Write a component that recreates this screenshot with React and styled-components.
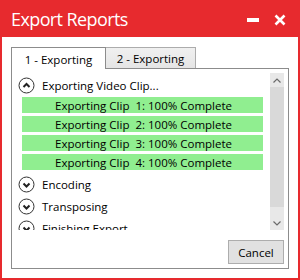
import React from 'react';
import styled, { createGlobalStyle } from 'styled-components';

const GlobalStyle = createGlobalStyle`
  html, body {
    margin: 0;
    padding: 0;
    background: #ffffff;
  }
  body {
    font-family: "Open Sans", "Noto Sans", "Liberation Sans", sans-serif;
  }
`;

const Window = styled.div`
  width: 300px;
  height: 280px;
  display: flex;
  flex-direction: column;
  box-sizing: border-box;
  background: #ffffff;
`;

const TitleBar = styled.div`
  height: 37px;
  flex: none;
  background: #e72a2e;
  display: flex;
  align-items: center;
  justify-content: space-between;
  padding: 0 14px 0 11px;
  border-top: 1px solid #e72a2e;
  box-sizing: border-box;
`;

const Title = styled.div`
  color: #ffffff;
  font-size: 18px;
  letter-spacing: -0.6px;
  margin-top: -1px;
`;

const Controls = styled.div`
  display: flex;
  align-items: center;
  gap: 15px;
  margin-top: 1px;
`;

const Body = styled.div`
  flex: 1;
  display: flex;
  flex-direction: column;
  border: 2px solid #e72a2e;
  border-top: none;
  padding: 10px 9px 9px;
  box-sizing: border-box;
  min-height: 0;
`;

const TabStrip = styled.div`
  display: flex;
  height: 21px;
  flex: none;
  align-items: flex-end;
`;

const Tab = styled.div`
  box-sizing: border-box;
  width: ${p => (p.$active ? '95px' : '91px')};
  height: ${p => (p.$active ? '22px' : '21px')};
  margin-left: ${p => (p.$active ? '0' : '-1px')};
  margin-bottom: ${p => (p.$active ? '-1px' : '0')};
  position: relative;
  z-index: ${p => (p.$active ? 1 : 0)};
  border: 1px solid ${p => (p.$active ? '#8c8c8c' : '#acacac')};
  border-bottom: none;
  background: ${p => (p.$active ? '#ffffff' : 'linear-gradient(#f0f0f0, #e5e5e5)')};
  color: #000000;
  font-size: 11.5px;
  display: flex;
  align-items: center;
  justify-content: center;
  padding-top: ${p => (p.$active ? '1px' : '0')};
`;

const TabPanel = styled.div`
  height: 201px;
  flex: none;
  box-sizing: border-box;
  border: 1px solid #8c8c8c;
  padding: 4px;
  display: flex;
  flex-direction: column;
`;

const ScrollArea = styled.div`
  height: 157px;
  flex: none;
  display: flex;
`;

const List = styled.div`
  flex: 1;
  overflow: hidden;
  padding-top: 1px;
`;

const ExpanderHeader = styled.div`
  height: 22px;
  display: flex;
  align-items: center;
  gap: 7px;
  padding-left: 2px;
  font-size: 11.5px;
  color: #000000;
  margin-top: ${p => (p.$gap ? '3px' : '0')};
`;

const Rows = styled.div`
  display: flex;
  flex-direction: column;
  gap: 3px;
  margin: 1px 7px 0 6px;
`;

const ClipRow = styled.div`
  height: 16px;
  background: #90ee90;
  font-size: 11.5px;
  color: #000000;
  padding-left: 33px;
  display: flex;
  align-items: center;
  white-space: pre;
`;

const ScrollBar = styled.div`
  width: 14px;
  flex: none;
  display: flex;
  flex-direction: column;
  background: #e8e8e8;
`;

const ArrowButton = styled.div`
  height: 14px;
  flex: none;
  display: flex;
  align-items: center;
  justify-content: center;
`;

const Thumb = styled.div`
  height: ${p => p.$size}px;
  flex: none;
  background: #d9d9d9;
`;

const Track = styled.div`
  flex: 1;
`;

const Footer = styled.div`
  display: flex;
  justify-content: flex-end;
  margin-top: 10px;
`;

const Button = styled.button`
  width: 56px;
  height: 24px;
  box-sizing: border-box;
  border: 1px solid #adadad;
  background: #e1e1e1;
  font-family: inherit;
  font-size: 11.5px;
  color: #000000;
  padding: 0;
`;

const ExpandIcon = ({ open }) => (
  <svg width="17" height="17" viewBox="0 0 17 17">
    <circle cx="8.5" cy="8.5" r="7.5" fill="#ffffff" stroke="#333333" strokeWidth="1" />
    <path
      d={open ? 'M5.5 10 L8.5 7 L11.5 10' : 'M5.5 7.5 L8.5 10.5 L11.5 7.5'}
      fill="none"
      stroke="#222222"
      strokeWidth="2"
    />
  </svg>
);

const SmallChevron = ({ up }) => (
  <svg width="8" height="5" viewBox="0 0 8 5">
    <path
      d={up ? 'M0.5 4.5 L4 1 L7.5 4.5' : 'M0.5 0.5 L4 4 L7.5 0.5'}
      fill="none"
      stroke="#6a6a6a"
      strokeWidth="1.2"
    />
  </svg>
);

const MinimizeIcon = () => (
  <svg width="12" height="4" viewBox="0 0 12 4">
    <rect x="0" y="0" width="12" height="4" fill="#ffffff" />
  </svg>
);

const CloseIcon = () => (
  <svg width="12" height="12" viewBox="0 0 12 12">
    <path d="M1.5 1.5 L10.5 10.5 M10.5 1.5 L1.5 10.5" stroke="#ffffff" strokeWidth="2.6" />
  </svg>
);

const clips = [1, 2, 3, 4];
const stages = ['Encoding', 'Transposing', 'Finishing Export'];

export default function App() {
  return (
    <>
      <GlobalStyle />
      <Window>
        <TitleBar>
          <Title>Export Reports</Title>
          <Controls>
            <MinimizeIcon />
            <CloseIcon />
          </Controls>
        </TitleBar>
        <Body>
          <TabStrip>
            <Tab $active>1 - Exporting</Tab>
            <Tab>2 - Exporting</Tab>
          </TabStrip>
          <TabPanel>
            <ScrollArea>
              <List>
                <ExpanderHeader>
                  <ExpandIcon open />
                  Exporting Video Clip...
                </ExpanderHeader>
                <Rows>
                  {clips.map(n => (
                    <ClipRow key={n}>{`Exporting Clip  ${n}: 100% Complete`}</ClipRow>
                  ))}
                </Rows>
                {stages.map((s, i) => (
                  <ExpanderHeader key={s} $gap={i === 0}>
                    <ExpandIcon />
                    {s}
                  </ExpanderHeader>
                ))}
              </List>
              <ScrollBar>
                <ArrowButton><SmallChevron up /></ArrowButton>
                <Thumb $size={120} />
                <Track />
                <ArrowButton><SmallChevron /></ArrowButton>
              </ScrollBar>
            </ScrollArea>
            <Footer>
              <Button>Cancel</Button>
            </Footer>
          </TabPanel>
        </Body>
      </Window>
    </>
  );
}
